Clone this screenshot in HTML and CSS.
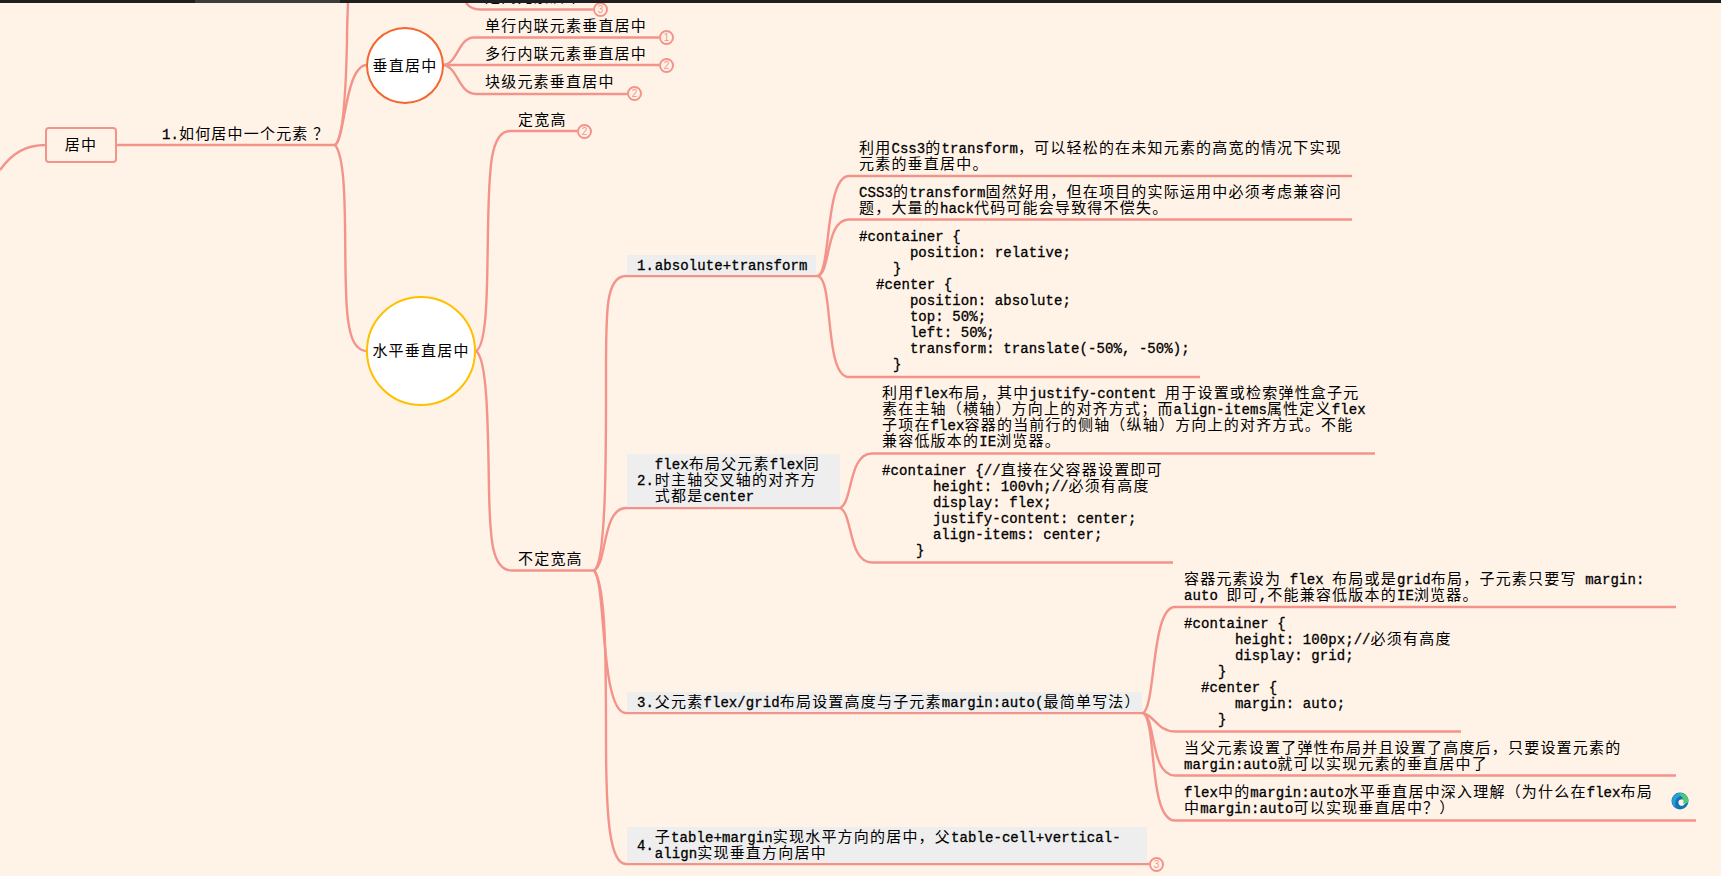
FILE: index.html
```html
<!DOCTYPE html>
<html lang="zh">
<head>
<meta charset="utf-8">
<title>居中</title>
<link rel="stylesheet" href="styles.css">
</head>
<body>
<div class="topbar"><div class="tb-a"></div><div class="tb-b"></div><div class="tb-c"></div></div>
<main class="canvas">
<svg class="links" width="1721" height="876" viewBox="0 0 1721 876" fill="none">
  <path d="M0 170C12 153 26 145 46 145"/>
  <path d="M116 145H335"/>
  <path d="M335 145C343 140 346 90 347 40C347 20 348 10 348 0"/>
  <path d="M335 145C345 140 345 65 367 65"/>
  <path d="M335 145C348 160 344 240 346 290C347 330 352 351 367 351"/>
  <path d="M466 3C470 8 474 9.500 480 9.500H593"/>
  <path d="M443 65C458 64 458 37.500 474 37.500H659"/>
  <path d="M443 65H659"/>
  <path d="M443 65C458 66 458 94 476 94H627"/>
  <path d="M476 351C488 345 487 280 488 230C489 170 490 131 510 131H577"/>
  <path d="M476 351C487 358 488 420 489 490C490 540 492 570.500 512 570.500H594"/>
  <path d="M594 570.500C607 563 606 440 606 370C606 310 606 276 626 276H818"/>
  <path d="M594 570.500C607 565 602 508 626 508H840"/>
  <path d="M594 570.500C606 580 600 713 626 713H1143"/>
  <path d="M594 570.500C606 585 606 660 606 740C606 820 610 864 626 864H1149"/>
  <path d="M818 276C831 272 825 176 849 176H1352"/>
  <path d="M818 276C831 272 825 219.500 849 219.500H1352"/>
  <path d="M818 276C834 280 824 377 849 377H1200"/>
  <path d="M840 508C853 503 848 453.500 872 453.500H1375"/>
  <path d="M840 508C853 513 848 562.500 872 562.500H1173"/>
  <path d="M1143 713C1156 706 1151 607 1175 607H1676"/>
  <path d="M1143 713C1155 716 1158 731.500 1175 731.500H1461"/>
  <path d="M1143 713C1156 718 1150 775.500 1175 775.500H1676"/>
  <path d="M1143 713C1157 720 1148 820.500 1175 820.500H1696"/>
</svg>

<div class="root node"><span>居中</span></div>
<div class="branch-label node"><span class="lat">1.</span>如何居中一个元素 ？</div>
<div class="circle orange node"><span>垂直居中</span></div>
<div class="circle yellow node"><span>水平垂直居中</span></div>

<div class="plain node p0">定高元素居中</div>
<div class="plain node p1">单行内联元素垂直居中</div>
<div class="plain node p2">多行内联元素垂直居中</div>
<div class="plain node p3">块级元素垂直居中</div>
<div class="plain node p4">定宽高</div>
<div class="plain node p5">不定宽高</div>

<span class="badge b1">3</span>
<span class="badge b2">1</span>
<span class="badge b3">2</span>
<span class="badge b4">2</span>
<span class="badge b5">2</span>
<span class="badge b6">3</span>

<div class="tag t1 node"><span class="num">1.</span><div class="lat">absolute+transform</div></div>
<div class="tag t2 node"><span class="num">2.</span><div class="lat">flex<span class="h">布局父元素</span>flex<span class="h">同</span><br><span class="h">时主轴交叉轴的对齐方</span><br><span class="h">式都是</span>center</div></div>
<div class="tag t3 node"><span class="num">3.</span><div class="lat"><span class="h">父元素</span>flex/grid<span class="h">布局设置高度与子元素</span>margin:auto(<span class="h">最简单写法）</span></div></div>
<div class="tag t4 node"><span class="num">4.</span><div class="lat"><span class="h">子</span>table+margin<span class="h">实现水平方向的居中，父</span>table-cell+vertical-<br>align<span class="h">实现垂直方向居中</span></div></div>

<div class="txt lat a1"><span class="h">利用</span>Css3<span class="h">的</span>transform<span class="h">，可以轻松的在未知元素的高宽的情况下实现</span>
<span class="h">元素的垂直居中。</span></div>
<div class="txt lat a2">CSS3<span class="h">的</span>transform<span class="h">固然好用，但在项目的实际运用中必须考虑兼容问</span>
<span class="h">题，大量的</span>hack<span class="h">代码可能会导致得不偿失。</span></div>
<div class="txt lat a3">#container {
      position: relative;
    }
  #center {
      position: absolute;
      top: 50%;
      left: 50%;
      transform: translate(-50%, -50%);
    }</div>

<div class="txt lat f1"><span class="h">利用</span>flex<span class="h">布局，其中</span>justify-content <span class="h">用于设置或检索弹性盒子元</span>
<span class="h">素在主轴（横轴）方向上的对齐方式；而</span>align-items<span class="h">属性定义</span>flex
<span class="h">子项在</span>flex<span class="h">容器的当前行的侧轴（纵轴）方向上的对齐方式。不能</span>
<span class="h">兼容低版本的</span>IE<span class="h">浏览器。</span></div>
<div class="txt lat f2">#container {//<span class="h">直接在父容器设置即可</span>
      height: 100vh;//<span class="h">必须有高度</span>
      display: flex;
      justify-content: center;
      align-items: center;
    }</div>

<div class="txt lat g1"><span class="h">容器元素设为</span> flex <span class="h">布局或是</span>grid<span class="h">布局，子元素只要写</span> margin:
auto <span class="h">即可</span>,<span class="h">不能兼容低版本的</span>IE<span class="h">浏览器。</span></div>
<div class="txt lat g2">#container {
      height: 100px;//<span class="h">必须有高度</span>
      display: grid;
    }
  #center {
      margin: auto;
    }</div>
<div class="txt lat g3"><span class="h">当父元素设置了弹性布局并且设置了高度后，只要设置元素的</span>
margin:auto<span class="h">就可以实现元素的垂直居中了</span></div>
<div class="txt lat g4">flex<span class="h">中的</span>margin:auto<span class="h">水平垂直居中深入理解（为什么在</span>flex<span class="h">布局</span>
<span class="h">中</span>margin:auto<span class="h">可以实现垂直居中？）</span></div>

<svg class="edge" width="18" height="18" viewBox="0 0 18 18" aria-hidden="true">
  <circle cx="9" cy="9" r="8.500" fill="#1173b8"/>
  <path d="M1 9A8.200 8.200 0 0 1 16.500 5.500C13.500 2.800 8 3.500 5.500 7C4 9 3.500 12 5 15C2.500 14 1 11.500 1 9Z" fill="#2a9fd6"/>
  <path d="M8 2C12 .5 16.500 3 17.500 8C17.500 11 15 12 13 12H9C8 10 9.500 7 12 6.500C11 5 9 3 8 2Z" fill="#50c878"/>
  <path d="M7.500 9.500C8 7.500 10.500 6.800 12 8C13 9 12.500 10.500 11.500 11.500H14C13 14 10 14.500 8.500 13C7.500 12 7.300 10.500 7.500 9.500Z" fill="#fff3e8"/>
</svg>
</main>
</body>
</html>
```
FILE: styles.css
```css
html, body {
  margin: 0;
  padding: 0;
  width: 1721px;
  height: 876px;
  overflow: hidden;
  background: #fff3e8;
}
.topbar {
  display: flex;
  height: 3px;
  background: #1f1f1f;
  position: relative;
  z-index: 2;
}
.tb-a { width: 195px; }
.tb-b { width: 145px; background: #3c3c3c; }
.tb-c { flex: 1; }

.canvas {
  position: absolute;
  inset: 0;
  font-family: "Liberation Mono", "Noto Sans CJK SC", monospace;
  font-size: 14px;
  color: #000;
}
.links { position: absolute; left: 0; top: 0; }
.links path { stroke: #f4938a; stroke-width: 2.4; }

.node {
  font-family: "Noto Sans CJK SC", "Liberation Sans", sans-serif;
  font-size: 15px;
  letter-spacing: 1.2px;
  line-height: 16px;
}
.lat {
  font-family: "Liberation Mono", "Noto Sans CJK SC", monospace;
  font-size: 14px;
  letter-spacing: 0.08px;
  font-weight: 400;
  -webkit-text-stroke: 0.3px #000;
  line-height: 16px;
}
.h {
  font-family: "Noto Sans CJK SC", "Liberation Sans", sans-serif;
  font-size: 15px;
  font-weight: 400;
  letter-spacing: 1.2px;
  line-height: 0;
  -webkit-text-stroke: 0;
}

.node { position: absolute; white-space: nowrap; }
.root {
  left: 45px; top: 127px;
  width: 72px; height: 36px;
  box-sizing: border-box;
  border: 2px solid #f4938a;
  border-radius: 4px;
  display: flex; align-items: center; justify-content: center;
  padding-bottom: 2px;
  background: #fff3e8;
}
.branch-label { left: 162px; top: 125px; }
.branch-label .lat { line-height: 0; }

.circle {
  box-sizing: border-box;
  border-radius: 50%;
  background: #fff;
  display: flex; align-items: center; justify-content: center;
  padding-bottom: 2px;
  border: 2px solid;
}
.orange { left: 366px; top: 27px; width: 78px; height: 77px; border-color: #f4662e; }
.yellow { left: 366px; top: 296px; width: 110px; height: 110px; border-color: #ffc000; }

.plain { line-height: 20px; }
.p0 { left: 485px; top: -14px; }
.p1 { left: 485px; top: 15px; }
.p2 { left: 485px; top: 43px; }
.p3 { left: 485px; top: 71px; }
.p4 { left: 518px; top: 109px; }
.p5 { left: 518px; top: 548px; }

.badge {
  position: absolute;
  box-sizing: border-box;
  width: 15px; height: 15px;
  border: 2px solid #f4938a;
  border-radius: 50%;
  background: #fff3e8;
  color: #f4938a;
  font: 10px/11px "Liberation Sans", sans-serif;
  text-align: center;
}
.b1 { left: 593px; top: 2px; }
.b2 { left: 659px; top: 30px; }
.b3 { left: 659px; top: 58px; }
.b4 { left: 627px; top: 86px; }
.b5 { left: 577px; top: 124px; }
.b6 { left: 1149px; top: 857px; }

.tag {
  left: 627px;
  box-sizing: border-box;
  display: flex;
  align-items: center;
  gap: 1px;
  padding-left: 10px;
  padding-top: 1px;
  background: #eeeeee;
  z-index: 1;
}
.tag .num {
  font-family: "Liberation Mono", monospace;
  font-size: 14px;
  letter-spacing: 0;
  -webkit-text-stroke: 0.3px #000;
}
.t1 { top: 255px; width: 189px; height: 20px; }
.t2 { top: 454px; width: 213px; height: 53px; }
.t3 { top: 692px; width: 515px; height: 20px; }
.t4 { top: 827px; width: 520px; height: 36px; }

.txt { position: absolute; white-space: pre; margin: 0; }
.a1 { left: 859px; top: 141px; }
.a2 { left: 859px; top: 185px; }
.a3 { left: 859px; top: 229px; }
.f1 { left: 882px; top: 386px; }
.f2 { left: 882px; top: 463px; }
.g1 { left: 1184px; top: 572px; }
.g2 { left: 1184px; top: 616px; }
.g3 { left: 1184px; top: 741px; }
.g4 { left: 1184px; top: 785px; }

.edge { position: absolute; left: 1671px; top: 792px; }
```
